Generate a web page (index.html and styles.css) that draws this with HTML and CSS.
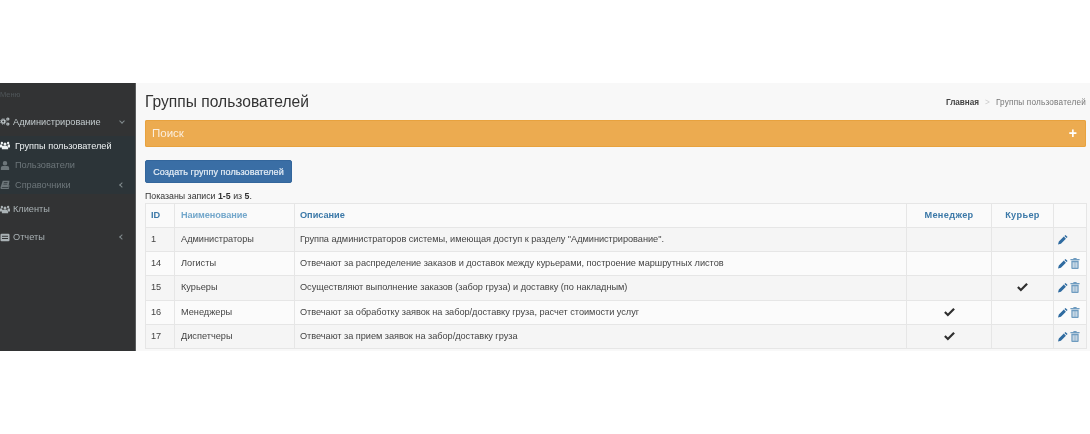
FILE: index.html
```html
<!DOCTYPE html>
<html lang="ru">
<head>
<meta charset="utf-8">
<title>Группы пользователей</title>
<link rel="stylesheet" href="styles.css">
</head>
<body>
<svg class="defs" width="0" height="0" aria-hidden="true">
  <symbol id="i-users" viewBox="0 0 16 12"><path d="M8 1a2.3 2.3 0 1 1 0 4.8A2.3 2.3 0 0 1 8 1zM3 0a1.9 1.9 0 1 1 0 3.8A1.9 1.9 0 0 1 3 0zM13 0a1.9 1.9 0 1 1 0 3.8A1.9 1.9 0 0 1 13 0zM0 4.5h3.6A3.4 3.4 0 0 0 4.5 7.4 4 4 0 0 0 3 9H0zM16 4.5h-3.6a3.4 3.4 0 0 1-.9 2.9A4 4 0 0 1 13 9h3zM5.5 6.5h5A2.5 2.5 0 0 1 13 9v3H3V9a2.5 2.5 0 0 1 2.5-2.5z"/></symbol>
  <symbol id="i-user" viewBox="0 0 12 12"><path d="M6 0a3 3 0 1 1 0 6A3 3 0 0 1 6 0zM3 6.5h6A2.5 2.5 0 0 1 11.500 9v3H.5V9A2.500 2.500 0 0 1 3 6.500z"/></symbol>
  <symbol id="i-book" viewBox="0 0 12 12"><path fill-rule="evenodd" d="M3 1h9l-1.500 8.500H2.500c-.9 0-.9 1.300 0 1.300h8l.8-4 .7.400-1 4.800H1.500C.2 12-.2 10.800.1 9.500zM4.500 3l-.2 1h5l.2-1zM4 5l-.2 1h5l.2-1z"/></symbol>
  <symbol id="i-report" viewBox="0 0 12 12"><path fill-rule="evenodd" d="M1.500 1h9A1.500 1.500 0 0 1 12 2.500v7a1.500 1.500 0 0 1-1.500 1.500h-9A1.500 1.500 0 0 1 0 9.500v-7A1.500 1.500 0 0 1 1.500 1zM2 3.500V5h8V3.500zM2 6.500V8h8V6.500z"/></symbol>
  <symbol id="i-cogs" viewBox="0 0 14 12"><g fill="none" stroke="currentColor"><circle cx="4.500" cy="6" r="2.300" stroke-width="1.800"/><circle cx="4.500" cy="6" r="3.800" stroke-width="1.300" stroke-dasharray="1.500 1.500"/><circle cx="11" cy="2.500" r="1.500" stroke-width="1.500"/><circle cx="11" cy="9.500" r="1.500" stroke-width="1.500"/></g></symbol>
  <symbol id="i-pencil" viewBox="0 0 12 12"><path d="M9 .5l2.500 2.500-1.300 1.300-2.500-2.500zM7 2.500L9.500 5l-6 6L0 12l1-3.500z"/></symbol>
  <symbol id="i-trash" viewBox="0 0 10 12"><path d="M3.500 0h3l.5 1h3v1.500H0V1h3zM1 3h8v8a1 1 0 0 1-1 1H2a1 1 0 0 1-1-1zM2.500 4.500v6h1v-6zM4.500 4.500v6h1v-6zM6.500 4.500v6h1v-6z" fill-rule="evenodd"/></symbol>
  <symbol id="i-check" viewBox="0 0 12 10"><path d="M4.200 9.500L0 5.400l1.700-1.700 2.500 2.400L10.200 0 12 1.700z"/></symbol>
</svg>
<div class="app">
  <aside class="sidebar">
    <div class="menu-title">Меню</div>
    <div class="item item-main"><svg class="ico"><use href="#i-cogs"/></svg><span>Администрирование</span><i class="chev chev-down"></i></div>
    <div class="sub">
      <div class="sub-item active"><svg class="ico"><use href="#i-users"/></svg><span>Группы пользователей</span></div>
      <div class="sub-item"><svg class="ico"><use href="#i-user"/></svg><span>Пользователи</span></div>
      <div class="sub-item"><svg class="ico"><use href="#i-book"/></svg><span>Справочники</span><i class="chev"></i></div>
    </div>
    <div class="item item-clients"><svg class="ico"><use href="#i-users"/></svg><span>Клиенты</span></div>
    <div class="item"><svg class="ico"><use href="#i-report"/></svg><span>Отчеты</span><i class="chev"></i></div>
  </aside>
  <main class="content">
    <header class="head">
      <h1>Группы пользователей</h1>
      <nav class="crumbs"><b>Главная</b><span class="sep">&gt;</span><span>Группы пользователей</span></nav>
    </header>
    <div class="search"><span>Поиск</span><span class="plus">+</span></div>
    <button class="create">Создать группу пользователей</button>
    <p class="summary">Показаны записи <b>1-5</b> из <b>5</b>.</p>
    <table class="grid">
      <colgroup><col class="c-id"><col class="c-name"><col class="c-desc"><col class="c-mgr"><col class="c-cur"><col class="c-act"></colgroup>
      <thead>
        <tr><th>ID</th><th class="light">Наименование</th><th>Описание</th><th class="mid">Менеджер</th><th class="mid">Курьер</th><th></th></tr>
      </thead>
      <tbody>
        <tr><td>1</td><td>Администраторы</td><td>Группа администраторов системы, имеющая доступ к разделу "Администрирование".</td><td></td><td></td><td><svg class="act pen"><use href="#i-pencil"/></svg></td></tr>
        <tr><td>14</td><td>Логисты</td><td>Отвечают за распределение заказов и доставок между курьерами, построение маршрутных листов</td><td></td><td></td><td><svg class="act pen"><use href="#i-pencil"/></svg><svg class="act bin"><use href="#i-trash"/></svg></td></tr>
        <tr><td>15</td><td>Курьеры</td><td>Осуществляют выполнение заказов (забор груза) и доставку (по накладным)</td><td></td><td class="mid"><svg class="check"><use href="#i-check"/></svg></td><td><svg class="act pen"><use href="#i-pencil"/></svg><svg class="act bin"><use href="#i-trash"/></svg></td></tr>
        <tr><td>16</td><td>Менеджеры</td><td>Отвечают за обработку заявок на забор/доставку груза, расчет стоимости услуг</td><td class="mid"><svg class="check"><use href="#i-check"/></svg></td><td></td><td><svg class="act pen"><use href="#i-pencil"/></svg><svg class="act bin"><use href="#i-trash"/></svg></td></tr>
        <tr><td>17</td><td>Диспетчеры</td><td>Отвечают за прием заявок на забор/доставку груза</td><td class="mid"><svg class="check"><use href="#i-check"/></svg></td><td></td><td><svg class="act pen"><use href="#i-pencil"/></svg><svg class="act bin"><use href="#i-trash"/></svg></td></tr>
      </tbody>
    </table>
  </main>
</div>
</body>
</html>
```
FILE: styles.css
```css
* { box-sizing: border-box; }
html, body { margin: 0; background: #fff; }
body { font-family: "Liberation Sans", Arial, sans-serif; font-size: 9.2px; color: #333; overflow: hidden; }
.defs { display: block; height: 0; }
.app { display: flex; margin-top: 83px; height: 268px; filter: blur(0.45px); }

.sidebar { width: 136px; flex: none; background: #323334; border-right: 1px solid #5a5c5d; color: #b8c7ce; }
.menu-title { height: 24px; padding-top: 7px; font-size: 7.500px; color: #505659; }
.item { display: flex; align-items: center; height: 28px; padding-right: 11px; color: #aab2b5; }
.item-main { height: 29px; color: #c3cbce; }
.item-clients { margin-top: 1px; }
.sub { background: #2c3438; height: 58px; }
.sub-item { display: flex; align-items: center; height: 19.500px; padding-right: 11px; color: #6d767a; }
.sub-item.active { color: #eef2f3; }
.ico { width: 10px; height: 9px; margin: 0 3px 0 0; fill: currentColor; flex: none; }
.sub-item .ico { margin-right: 5px; }
.chev { margin-left: auto; width: 4px; height: 4px; border-left: 1px solid #828b8e; border-bottom: 1px solid #828b8e; transform: rotate(45deg); }
.chev-down { transform: rotate(-45deg); margin-top: -2px; }

.content { flex: 1; min-width: 0; background: #f8f8f8; padding: 0 4px 0 9px; }
.head { display: flex; justify-content: space-between; align-items: center; height: 37px; }
h1 { margin: 0; font-size: 15.600px; font-weight: 400; color: #333; }
.crumbs { display: flex; gap: 6px; font-size: 8.200px; color: #777; padding-top: 2px; letter-spacing: .2px; }
.crumbs b { color: #444; letter-spacing: -.05px; }
.sep { color: #ccc; }

.search { display: flex; justify-content: space-between; align-items: center; height: 27px; padding: 0 9px 2px 7px; background: #ecab50; border-radius: 2px; color: #fbeedd; font-size: 11.500px; box-shadow: inset 0 0 0 1px #e8a23e; }
.plus { color: #fff; font-weight: 700; font-size: 14px; }

.create { display: block; width: 147px; height: 23px; margin: 13px 0 0; padding: 0; background: #3a6ea5; border: 1px solid #33669c; border-radius: 2px; color: #e6eef6; font: 400 9px "Liberation Sans", Arial, sans-serif; letter-spacing: .08px; -webkit-text-stroke: .2px #e6eef6; }
.summary { margin: 7px 0 0; height: 13px; font-size: 8.800px; line-height: 13px; color: #333; }
.summary b { font-weight: 700; }

.grid { width: 941px; table-layout: fixed; border-collapse: collapse; border: 1px solid #e6e6e6; background: #fbfbfb; }
.c-id { width: 29px; } .c-name { width: 120px; } .c-desc { width: 612px; } .c-mgr { width: 85px; } .c-cur { width: 62px; } .c-act { width: 33px; }
.grid th, .grid td { height: 24.200px; padding: 0 5px; border: 1px solid #e6e6e6; text-align: left; vertical-align: middle; white-space: nowrap; letter-spacing: -.03px; }
.grid td:nth-child(2), .grid th:nth-child(2) { padding-left: 6px; letter-spacing: 0; }
.grid th { height: 24px; padding-bottom: 1px; font-weight: 700; color: #3c79a8; background: #fafafa; }
.grid th.light { color: #73a7cb; letter-spacing: -.1px; }
.grid .mid { text-align: center; }
.grid th.mid { letter-spacing: .35px; }
.grid tbody tr:nth-child(odd) { background: #f5f5f5; }
.grid td { color: #444; line-height: 1; }
.grid td:last-child { padding: 0 4px; }
.act { width: 10px; height: 11px; vertical-align: middle; margin-right: 2px; }
.pen { fill: #2f6ba0; }
.bin { fill: #6f9cc0; }
.check { width: 11px; height: 9px; fill: #2f2f2f; vertical-align: middle; }
```
